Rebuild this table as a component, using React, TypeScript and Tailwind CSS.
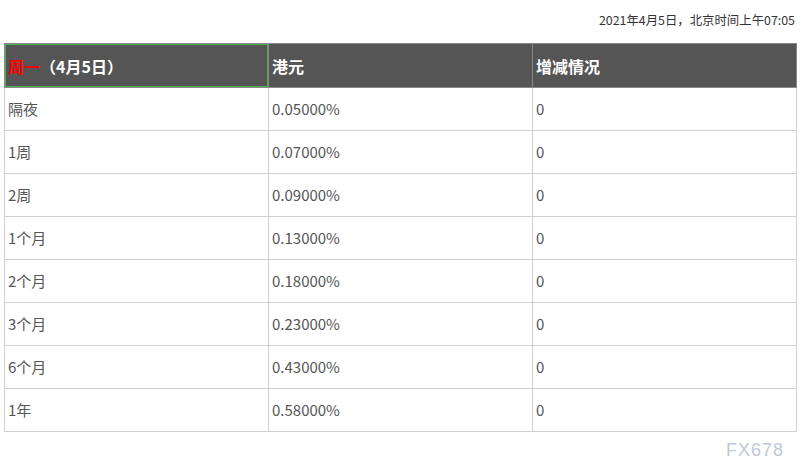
import React from "react";

const rows: [string, string, string][] = [
  ["隔夜", "0.05000%", "0"],
  ["1周", "0.07000%", "0"],
  ["2周", "0.09000%", "0"],
  ["1个月", "0.13000%", "0"],
  ["2个月", "0.18000%", "0"],
  ["3个月", "0.23000%", "0"],
  ["6个月", "0.43000%", "0"],
  ["1年", "0.58000%", "0"],
];

export default function App() {
  return (
    <div
      className="w-[800px] h-[470px] bg-white relative overflow-hidden"
      style={{ fontFamily: '"Noto Sans CJK SC", "Noto Sans", sans-serif' }}
    >
      <div className="flex justify-end pt-[11px] pr-[5px] h-[43px]">
        <span className="text-[12.4px] leading-[18px] text-[#333]">2021年4月5日，北京时间上午07:05</span>
      </div>
      <table className="ml-[4px] w-[793px] border-collapse table-fixed">
        <thead>
          <tr className="bg-[#555555] text-white">
            <th className="h-[44px] border border-[#888] shadow-[inset_0_0_0_1px_#4caf50] px-[3px] text-left text-[16px] font-bold">
              <span className="text-[#ff0000]">周一</span>（4月5日）
            </th>
            <th className="h-[44px] border border-[#888] px-[3px] text-left text-[16px] font-bold">港元</th>
            <th className="h-[44px] border border-[#888] px-[3px] text-left text-[16px] font-bold">增减情况</th>
          </tr>
        </thead>
        <tbody>
          {rows.map((r, i) => (
            <tr key={i} className="text-[#555]">
              {r.map((c, j) => (
                <td key={j} className="h-[43px] border border-[#d0d0d0] px-[3px] text-[15px]">
                  {c}
                </td>
              ))}
            </tr>
          ))}
        </tbody>
      </table>
      <div className="absolute left-[726px] top-[437px] text-[18px] tracking-[1px] text-[#bfc9d6]" style={{ fontFamily: '"Liberation Sans", Arial, sans-serif' }}>
        FX678
      </div>
    </div>
  );
}
